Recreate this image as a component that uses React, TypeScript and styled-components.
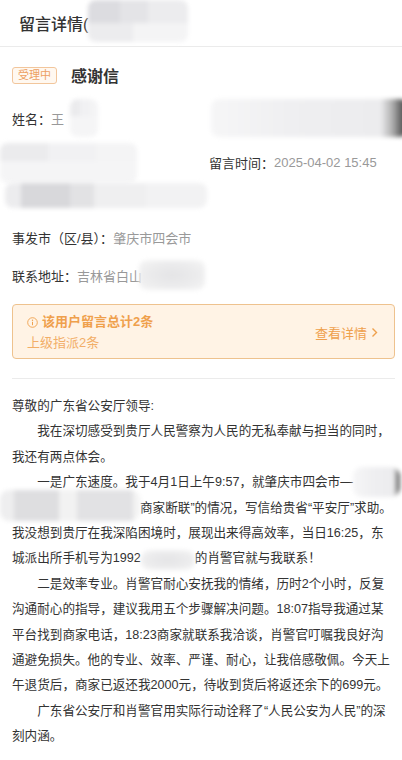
import styled, { createGlobalStyle } from "styled-components";

type Tone = "header" | "pale" | "edge" | "blocks" | "strip" | "soft";

const tones: Record<Tone, string> = {
	header: `linear-gradient(90deg, #dcdce0 0 32%, #e4e4e7 32% 60%, #ececee 60% 100%) top / 100% 55% no-repeat,
		linear-gradient(90deg, #ececee 0 45%, #f4f4f5 45% 100%) bottom / 100% 45% no-repeat`,
	pale: `linear-gradient(90deg, #ebebed 0 35%, #f1f1f3 35% 70%, #f4f4f5 70% 100%) top / 100% 45% no-repeat,
		linear-gradient(90deg, #f5f5f6 0 100%) bottom / 100% 55% no-repeat`,
	edge: `linear-gradient(90deg, #f6f6f7 0%, #efeff1 40%, #ececee 86%, #b0b0b0 92%, #5e5e5e 97%, #4c4c4c 100%)`,
	blocks: `linear-gradient(90deg, #ececee 0 8%, #d8d8db 8% 32%, #e2e2e4 32% 44%, #efeff0 44% 70%, #f2f2f3 70% 100%)`,
	strip: `linear-gradient(90deg, #eeeeef 0 10%, #dedee0 10% 42%, #f2f2f2 42% 55%, #e2e2e4 55% 95%, #f3f3f3 95% 100%)`,
	soft: `radial-gradient(ellipse at center, #e4e4e6 0%, #ececed 55%, #f6f6f6 100%)`,
};

const GlobalStyle = createGlobalStyle`
	* { box-sizing: border-box; }
	html, body { margin: 0; padding: 0; background: #fff; }
	body {
		font-family: "Liberation Sans", "Noto Sans CJK SC", sans-serif;
		color: #333;
	}
`;

const Page = styled.div`
	width: 402px;
	height: 760px;
	overflow: hidden;
	background: #fff;
`;

const Header = styled.header`
	height: 47px;
	display: flex;
	align-items: center;
	padding-left: 19px;
	border-bottom: 1px solid #ebebeb;
	font-size: 16px;
	font-weight: 500;
	color: #333;
`;

// a redaction patch that takes room in the flow
const Blur = styled.span<{ $w: number; $h: number; $tone: Tone; $ml?: number; $mt?: number; $mr?: number }>`
	display: inline-block;
	flex: none;
	align-self: ${(p) => (p.$mt !== undefined ? "flex-start" : "center")};
	width: ${(p) => p.$w}px;
	height: ${(p) => p.$h}px;
	margin-left: ${(p) => p.$ml ?? 0}px;
	margin-right: ${(p) => p.$mr ?? 0}px;
	margin-top: ${(p) => p.$mt ?? 0}px;
	border-radius: 8px;
	filter: blur(2px);
	background: ${(p) => tones[p.$tone]};
`;

// a redaction patch over running text, spilling past its line box
const Redact = styled.span<{ $w: number; $tone: Tone; $l?: number; $r?: number; $t?: number; $b?: number }>`
	position: relative;
	display: inline-block;
	width: ${(p) => p.$w}px;
	height: 1em;
	vertical-align: middle;
	&::before {
		content: "";
		position: absolute;
		left: ${(p) => p.$l ?? 0}px;
		right: ${(p) => p.$r ?? 0}px;
		top: ${(p) => p.$t ?? -6}px;
		bottom: ${(p) => p.$b ?? -6}px;
		border-radius: 9px;
		filter: blur(2px);
		background: ${(p) => tones[p.$tone]};
	}
`;

const Content = styled.main`
	padding: 0 7px 0 12px;
`;

const TitleRow = styled.div`
	margin-top: 18px;
	height: 20px;
	display: flex;
	align-items: center;
	gap: 14px;
`;

const Tag = styled.span`
	height: 17px;
	padding: 0 5px;
	border: 1px solid #f2c69c;
	border-radius: 3px;
	background: #fff8f0;
	color: #eda063;
	font-size: 11px;
	line-height: 15px;
`;

const Title = styled.h1`
	margin: 0;
	font-size: 16px;
	font-weight: 700;
	color: #333;
`;

const InfoRow = styled.div<{ $top: number; $h?: number }>`
	margin-top: ${(p) => p.$top}px;
	height: ${(p) => p.$h ?? 20}px;
	display: flex;
	align-items: center;
	font-size: 13px;
`;

const InfoGrid = styled.div`
	margin-top: 2px;
	height: 36px;
	display: grid;
	grid-template-columns: 197px 1fr;
	align-items: center;
	font-size: 13px;
`;

const Cell = styled.div`
	display: flex;
	align-items: center;
	height: 100%;
`;

const Label = styled.span`
	color: #333;
	white-space: nowrap;
`;

const Value = styled.span`
	color: #999;
	white-space: nowrap;
`;

const Notice = styled.div`
	margin-top: 19px;
	height: 55px;
	display: flex;
	align-items: center;
	justify-content: space-between;
	padding: 2px 16px 0 14px;
	border: 1px solid #eec28e;
	border-radius: 4px;
	background: #fff3e5;
`;

const NoticeText = styled.div`
	display: flex;
	flex-direction: column;
	gap: 1px;
`;

const NoticeHead = styled.div`
	display: flex;
	align-items: center;
	gap: 4px;
	font-size: 13px;
	line-height: 20px;
	font-weight: 700;
	color: #efa04c;
`;

const NoticeSub = styled.div`
	font-size: 13px;
	line-height: 20px;
	color: #f2ae68;
`;

const NoticeLink = styled.div`
	display: flex;
	align-items: center;
	gap: 4px;
	font-size: 13px;
	color: #efa04c;
`;

const Divider = styled.hr`
	margin: 19px 0 0;
	border: 0;
	height: 1px;
	background: #ebebeb;
`;

const Letter = styled.div`
	margin-top: 15px;
	font-size: 12.6px;
	line-height: 25.4px;
	color: #333;
`;

const Para = styled.p<{ $indent?: boolean }>`
	margin: 0;
	text-indent: ${(p) => (p.$indent ? "2em" : "0")};
`;

const InfoIcon = () => (
	<svg width="11" height="11" viewBox="0 0 11 11" fill="none">
		<circle cx="5.5" cy="5.5" r="4.8" stroke="#efa04c" strokeWidth="0.9" />
		<circle cx="5.5" cy="3.2" r="0.7" fill="#efa04c" />
		<path d="M5.5 4.8V8.2" stroke="#efa04c" strokeWidth="1" />
	</svg>
);

const Chevron = () => (
	<svg width="7" height="11" viewBox="0 0 7 11" fill="none">
		<path d="M1.5 1.5L5.5 5.5L1.5 9.5" stroke="#efa04c" strokeWidth="1.4" />
	</svg>
);

export default function App() {
	return (
		<Page>
			<GlobalStyle />
			<Header>
				留言详情(
				<Blur $w={100} $h={42} $tone="header" $mt={0} />
			</Header>
			<Content>
				<TitleRow>
					<Tag>受理中</Tag>
					<Title>感谢信</Title>
				</TitleRow>

				<InfoRow $top={12} $h={42}>
					<Label>姓名：</Label>
					<Value>王</Value>
					<Blur $w={28} $h={38} $tone="pale" $ml={6} />
					<Blur $w={197} $h={38} $tone="edge" $ml={113} $mr={-7} />
				</InfoRow>
				<InfoGrid>
					<Cell>
						<Blur $w={137} $h={40} $tone="pale" $ml={-12} $mt={2} />
					</Cell>
					<Cell>
						<Label>留言时间：</Label>
						<Value>2025-04-02 15:45</Value>
					</Cell>
				</InfoGrid>
				<InfoRow $top={6} $h={25}>
					<Blur $w={202} $h={25} $tone="blocks" $ml={-7} />
				</InfoRow>

				<InfoRow $top={19}>
					<Label>事发市（区/县）：</Label>
					<Value>肇庆市四会市</Value>
				</InfoRow>
				<InfoRow $top={18}>
					<Label>联系地址：</Label>
					<Value>吉林省白山</Value>
					<Blur $w={66} $h={30} $tone="soft" $ml={-3} />
				</InfoRow>

				<Notice>
					<NoticeText>
						<NoticeHead>
							<InfoIcon />
							该用户留言总计2条
						</NoticeHead>
						<NoticeSub>上级指派2条</NoticeSub>
					</NoticeText>
					<NoticeLink>
						查看详情
						<Chevron />
					</NoticeLink>
				</Notice>

				<Divider />

				<Letter>
					<Para>尊敬的广东省公安厅领导:</Para>
					<Para $indent>我在深切感受到贵厅人民警察为人民的无私奉献与担当的同时，我还有两点体会。</Para>
					<Para $indent>
						一是广东速度。我于4月1日上午9:57，就肇庆市四会市—
						<Redact $w={38} $tone="edge" $r={-9} $t={-10} $b={-8} />
						<Redact $w={128} $tone="strip" $l={-12} $t={-12} $b={-6} />
						商家断联”的情况，写信给贵省“平安厅”求助。我没想到贵厅在我深陷困境时，展现出来得高效率，当日16:25，东城派出所手机号为1992
						<Redact $w={54} $tone="soft" $t={-3} $b={-5} />
						的肖警官就与我联系！
					</Para>
					<Para $indent>
						二是效率专业。肖警官耐心安抚我的情绪，历时2个小时，反复沟通耐心的指导，建议我用五个步骤解决问题。18:07指导我通过某平台找到商家电话，18:23商家就联系我洽谈，肖警官叮嘱我良好沟通避免损失。他的专业、效率、严谨、耐心，让我倍感敬佩。今天上午退货后，商家已返还我2000元，待收到货后将返还余下的699元。
					</Para>
					<Para $indent>广东省公安厅和肖警官用实际行动诠释了“人民公安为人民”的深刻内涵。</Para>
				</Letter>
			</Content>
		</Page>
	);
}
